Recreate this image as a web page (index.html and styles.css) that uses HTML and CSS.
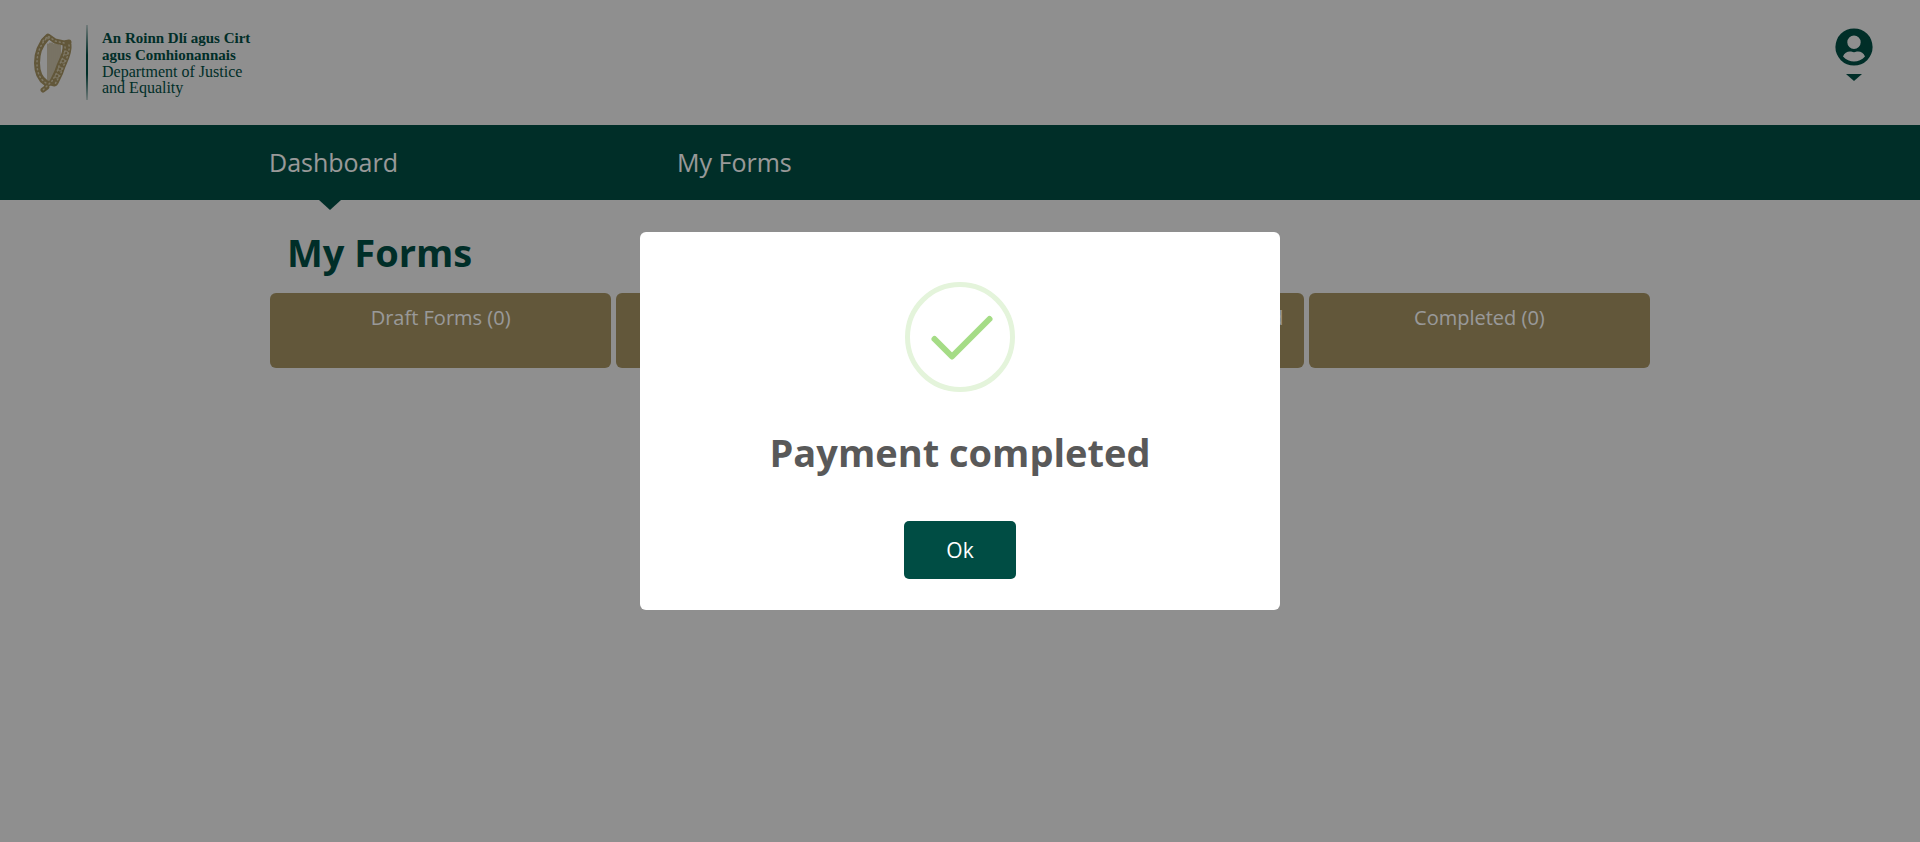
FILE: index.html
```html
<!DOCTYPE html>
<html lang="en">
<head>
    <meta charset="UTF-8">
    <meta name="viewport" content="width=device-width, initial-scale=1.0">
    <title>My Forms</title>
    <link rel="stylesheet" href="styles.css">
</head>
<body>
    <header class="header">
        <a class="logo" href="#">
            <svg class="harp" viewBox="0 0 40 62" width="40" height="62" aria-hidden="true">
                <g fill="none" stroke-linecap="round" stroke-linejoin="round">
                    <path d="M14 12V50M16 11V49M18 11V46M20 12V43M22 12V39M24 12V35M26 13V30" stroke="#a39161" stroke-width="1"/>
                    <path d="M12 7C6 13 3 22 3 31C3 41 6 47 12 51" stroke="#a39161" stroke-width="6"/>
                    <path d="M9 9L14 4L21 9L30 11L35 10" stroke="#a39161" stroke-width="5"/>
                    <path d="M33 13C34 20 30 27 27 34C25 41 22 46 20 50" stroke="#a39161" stroke-width="9"/>
                    <path d="M18 51C14 51 12 52 13 55L9 58" stroke="#a39161" stroke-width="5"/>
                    <g stroke="#d2c8aa" stroke-width="1.5" stroke-dasharray="1 3">
                        <path d="M12 7C6 13 3 22 3 31C3 41 6 47 12 51"/>
                        <path d="M9 9L14 4L21 9L30 11"/>
                        <path d="M35 13C36 20 32 28 29 35C27 42 24 47 21 52"/>
                        <path d="M31 15C32 20 28 27 25 34C23 41 20 46 18 49L13 54L9 58"/>
                    </g>
                    <g stroke="#d2c8aa" stroke-width="1">
                        <circle cx="32" cy="21" r="2"/>
                        <circle cx="29" cy="29" r="2"/>
                        <circle cx="26" cy="37" r="2"/>
                        <circle cx="23" cy="44" r="2"/>
                        <circle cx="14" cy="6" r="1"/>
                    </g>
                </g>
            </svg>
            <span class="logo-line"></span>
            <span class="logo-text">
                <b>An Roinn Dlí agus Cirt<br>agus Comhionannais</b>
                <span>Department of Justice<br>and Equality</span>
            </span>
        </a>
        <button class="user-menu" type="button" aria-label="Account">
            <svg viewBox="0 0 38 38" width="38" height="38" aria-hidden="true">
                <path fill="#004d44" fill-rule="evenodd" d="M19 0.4A18.6 18.6 0 1 0 19 37.6A18.6 18.6 0 1 0 19 0.4ZM19 7.6A6.7 6.7 0 1 1 19 21A6.7 6.7 0 1 1 19 7.6ZM8 28.4C9.200 25.500 12 23.600 15 23.600C17 23.600 17 24.300 19 24.300C21 24.300 21 23.600 23 23.600C26 23.600 28.800 25.500 30 28.400C27 31.800 23 33.600 19 33.600C15 33.600 11 31.800 8 28.400Z"/>
            </svg>
            <span class="caret"></span>
        </button>
    </header>

    <nav class="nav">
        <ul class="container">
            <li class="active"><a href="#">Dashboard</a></li>
            <li><a href="#">My Forms</a></li>
        </ul>
    </nav>

    <main class="container">
        <h1>My Forms</h1>
        <div class="tabs">
            <button type="button">Draft Forms (0)</button>
            <button type="button">Submitted Forms (0)</button>
            <button type="button">Additional Information Required (0)</button>
            <button type="button">Completed (0)</button>
        </div>
    </main>

    <div class="overlay">
        <div class="modal" role="dialog" aria-modal="true" aria-labelledby="modal-title">
            <svg class="success" viewBox="0 0 110 110" width="110" height="110" aria-hidden="true">
                <circle cx="55" cy="55" r="52.5" fill="none" stroke="#e4f4db" stroke-width="5"/>
                <path d="M29.500 57L47 74.500L84.500 37" fill="none" stroke="#a5dc86" stroke-width="6" stroke-linecap="round" stroke-linejoin="round"/>
            </svg>
            <h2 id="modal-title">Payment completed</h2>
            <button class="ok" type="button">Ok</button>
        </div>
    </div>
</body>
</html>
```

FILE: styles.css
```css
* {
    box-sizing: border-box;
}
body {
    margin: 0;
    font-family: 'Open Sans', 'Noto Sans', sans-serif;
    font-size: 20px;
    background-color: #eee;
    color: #004d44;
}
button {
    border: none;
    font-family: inherit;
    cursor: pointer;
}
.container {
    width: 72%;
    max-width: 1380px;
    margin: 0 auto;
}

/* Header */
.header {
    display: flex;
    justify-content: space-between;
    align-items: flex-start;
    height: 125px;
    padding: 25px 47px 0 34px;
}
.logo {
    display: flex;
    align-items: center;
    color: #004d44;
    text-decoration: none;
}
.logo-line {
    width: 2px;
    height: 75px;
    margin: 0 14px 0 12px;
    background: linear-gradient(to bottom, rgba(0, 77, 68, 0.2), #004d44 40%, #004d44 65%, rgba(0, 77, 68, 0.2));
}
.logo-text {
    display: flex;
    flex-direction: column;
    font-family: 'Liberation Serif', serif;
    font-size: 16px;
    line-height: 16px;
}
.logo-text b {
    font-size: 15px;
    line-height: 17px;
}
.user-menu {
    display: flex;
    flex-direction: column;
    align-items: center;
    gap: 8px;
    padding: 3px 0 0;
    background: none;
}
.caret {
    border: 8px solid transparent;
    border-top: 7px solid #004d44;
    border-bottom: 0;
}

/* Navigation */
.nav {
    background-color: #004d44;
}
.nav ul {
    display: flex;
    gap: 279px;
    max-width: 1382px;
    padding: 0;
    list-style-type: none;
}
.nav li {
    position: relative;
}
.nav a {
    display: block;
    color: white;
    font-size: 25px;
    line-height: 75px;
    text-decoration: none;
}
.nav .active::after {
    content: "";
    position: absolute;
    top: 100%;
    left: 50px;
    border: 11px solid transparent;
    border-top: 10px solid #004d44;
    border-bottom: 0;
}

/* Forms */
h1 {
    margin: 0;
    padding: 24px 17px 13px;
    font-size: 38px;
    line-height: 56px;
}
.tabs {
    display: grid;
    grid-template-columns: repeat(4, 1fr);
    gap: 5px;
}
.tabs button {
    display: flex;
    justify-content: center;
    min-height: 75px;
    padding: 11px 15px 10px;
    border-radius: 6px;
    background-color: #a39161;
    color: white;
    font-size: 20px;
    line-height: 27px;
}

/* Modal */
.overlay {
    position: fixed;
    inset: 0;
    display: flex;
    align-items: center;
    justify-content: center;
    background-color: rgba(0, 0, 0, 0.4);
}
.modal {
    display: flex;
    flex-direction: column;
    align-items: center;
    width: 640px;
    max-width: 100%;
    padding: 50px 25px 31px;
    border-radius: 6px;
    background-color: white;
}
.modal h2 {
    margin: 32px 0 41px;
    color: #595959;
    font-size: 38px;
    line-height: 56px;
}
.ok {
    padding: 14px 42px;
    border-radius: 5px;
    background-color: #004d44;
    color: white;
    font-size: 21px;
    line-height: 30px;
}
```
